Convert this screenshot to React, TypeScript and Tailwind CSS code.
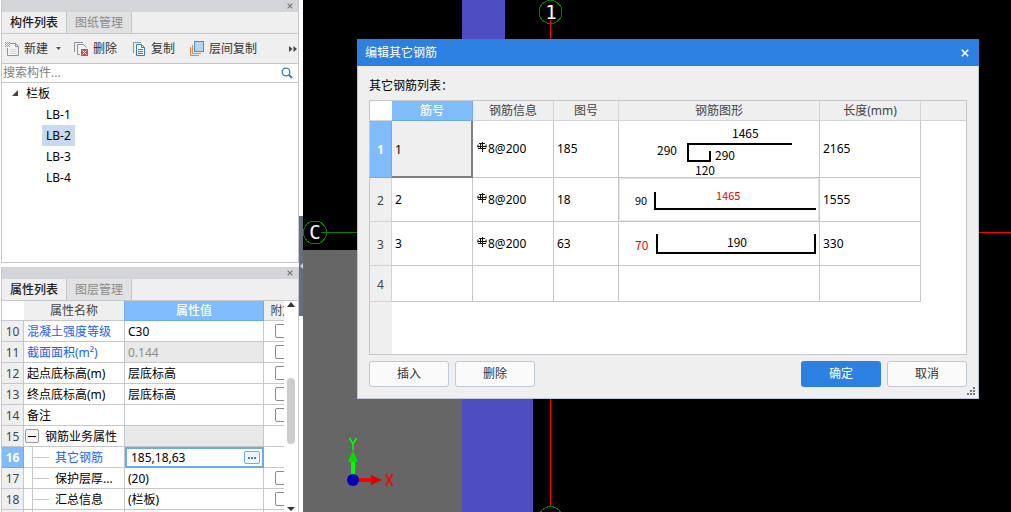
import React, { useState } from 'react';

const components = ['LB-1', 'LB-2', 'LB-3', 'LB-4'];

type PropertyRow = {
  no: number | null;
  name: string;
  value: string;
  link?: boolean;
  readOnly?: boolean;
  group?: boolean;
  child?: boolean;
  check?: boolean;
};

const properties: PropertyRow[] = [
  { no: 10, name: '混凝土强度等级', value: 'C30', link: true, check: true },
  { no: 11, name: '截面面积(m²)', value: '0.144', link: true, readOnly: true, check: true },
  { no: 12, name: '起点底标高(m)', value: '层底标高', check: true },
  { no: 13, name: '终点底标高(m)', value: '层底标高', check: true },
  { no: 14, name: '备注', value: '', check: true },
  { no: 15, name: '钢筋业务属性', value: '', group: true, readOnly: true },
  { no: 16, name: '其它钢筋', value: '185,18,63', link: true, child: true },
  { no: 17, name: '保护层厚...', value: '(20)', child: true, check: true },
  { no: 18, name: '汇总信息', value: '(栏板)', child: true, check: true },
  { no: null, name: '', value: '', child: true },
];

const CloseIcon = ({ size }: { size: number }) => (
  <svg width={size} height={size} viewBox="0 0 8 8" fill="none" stroke="currentColor" strokeWidth="1.6">
    <path d="M0.8 0.8 7.2 7.2M7.2 0.8 0.8 7.2" />
  </svg>
);

const NewIcon = () => (
  <svg width="16" height="16" viewBox="0 0 16 16" fill="none">
    <path d="M6 2.5h5.500l3 3v9h-11V7" fill="#f4f4f4" stroke="#8a949e" />
    <path d="M11.500 2.500v3h3" stroke="#8a949e" />
    <path d="M6 8.500h7M6 10.500h7M6 12.500h7" stroke="#d3d7db" />
    <path d="M1 1.500h1M3 1.500h1M5 1.500h1M2 2.500h1M4 2.500h1M1 3.500h1M3 3.500h1M5 3.500h1M2 4.500h1M4 4.500h1M1 5.500h1M3 5.500h1M5 5.500h1" stroke="#f08a1d" />
  </svg>
);

const DeleteIcon = () => (
  <svg width="16" height="16" viewBox="0 0 16 16" fill="none">
    <path d="M1.500 11V1.500H10" stroke="#8a949e" />
    <path d="M7 13.500H4.500v-10h6l3 3" fill="#f4f4f4" stroke="#8a949e" />
    <rect x="8" y="8" width="7" height="7" fill="#d9474b" />
    <path d="m9.500 9.500 4 4m0-4-4 4" stroke="#fff" />
  </svg>
);

const CopyIcon = () => (
  <svg width="16" height="16" viewBox="0 0 16 16" fill="none">
    <path d="M2.500 12V1.500H10" stroke="#8a949e" />
    <path d="M5.500 3.500h5l3 3v8h-8z" fill="#fff" stroke="#2c7fc9" />
    <path d="M10.500 3.500v3h3" stroke="#2c7fc9" />
    <path d="M7 8.500h5M7 10.500h5M7 12.500h5" stroke="#2c7fc9" />
  </svg>
);

const LayerCopyIcon = () => (
  <svg width="16" height="16" viewBox="0 0 16 16" fill="none">
    <path d="M1.500 6v8.500H10" stroke="#ee8136" />
    <path d="M3.500 4v8.500H12" stroke="#ee8136" />
    <rect x="5.500" y="0.500" width="9" height="10" fill="#b5d6fc" stroke="#3f8fdc" />
  </svg>
);

const SearchIcon = () => (
  <svg width="12" height="12" viewBox="0 0 12 12" fill="none" stroke="#2683c2">
    <circle cx="5" cy="5" r="3.800" strokeWidth="1.300" />
    <path d="m8 8 3 3" strokeWidth="2" />
  </svg>
);

// HRB400 grade mark that stands before the diameter
const RebarMark = () => (
  <svg className="-mt-1" width="10" height="10" viewBox="0 0 10 10" fill="none" stroke="#111">
    <path d="M2 1.500h6M1 2.500v3M9 2.500v3M1 6.500h8M0.500 4.500h9M5.500 0v10M3.500 1v6" />
  </svg>
);

const DockHeader = () => (
  <div className="flex h-3 shrink-0 items-center justify-end bg-[#d4d5d9] pr-[5px] text-[#777]">
    <button type="button" aria-label="关闭面板">
      <CloseIcon size={6} />
    </button>
  </div>
);

const Tabs = ({ items }: { items: string[] }) => (
  <div role="tablist" className="flex h-[22px] shrink-0 border-b border-[#c5c7cd] bg-[#efefef]">
    {items.map((item, i) => (
      <button
        key={item}
        type="button"
        role="tab"
        aria-selected={i === 0}
        className={`w-[65px] border-r border-[#c5c7cd] text-center ${
          i === 0 ? 'font-medium text-[#222]' : 'bg-[#e1e1e1] text-[#8a8a8a]'
        }`}
      >
        {item}
      </button>
    ))}
  </div>
);

function ComponentPanel() {
  const [selected, setSelected] = useState('LB-2');

  return (
    <section className="flex min-h-0 flex-col border border-t-0 border-[#c5c7cd] bg-white">
      <DockHeader />
      <Tabs items={['构件列表', '图纸管理']} />
      <div className="flex h-[30px] shrink-0 items-center overflow-hidden border-b border-[#c5c7cd] bg-[#efefef] pl-0.5 whitespace-nowrap text-[#333]">
        <button type="button" className="flex items-center gap-1">
          <NewIcon />
          新建
          <svg className="ml-1" width="5" height="3" viewBox="0 0 5 3" fill="#555">
            <path d="M0 0h5L2.500 3z" />
          </svg>
        </button>
        <button type="button" className="ml-3 flex items-center gap-1">
          <DeleteIcon />
          删除
        </button>
        <button type="button" className="ml-3.5 flex items-center gap-1">
          <CopyIcon />
          复制
        </button>
        <button type="button" className="ml-3.5 flex items-center gap-1">
          <LayerCopyIcon />
          层间复制
        </button>
        <button type="button" aria-label="更多" className="ml-auto pr-px">
          <svg width="8" height="6" viewBox="0 0 8 6" fill="#444">
            <path d="M0 0v6l3.500-3zM4.500 0v6L8 3z" />
          </svg>
        </button>
      </div>
      <div className="flex h-[19px] shrink-0 items-center border-b border-[#c5c7cd] pr-[5px] pl-px">
        <input
          type="text"
          aria-label="搜索构件"
          placeholder="搜索构件..."
          className="min-w-0 flex-1 outline-none placeholder:text-[#808080]"
        />
        <button type="button" aria-label="搜索">
          <SearchIcon />
        </button>
      </div>
      <div className="min-h-0 flex-1 overflow-hidden text-black">
        <div className="flex h-[21px] items-center gap-[7px] pl-2.5">
          <svg width="7" height="7" viewBox="0 0 7 7" fill="#444">
            <path d="M6 0v6H0z" />
          </svg>
          栏板
        </div>
        <ul className="pl-10">
          {components.map((name) => (
            <li key={name}>
              <button
                type="button"
                onClick={() => setSelected(name)}
                className={`h-[21px] px-1 ${selected === name ? 'bg-[#c9d9f1]' : ''}`}
              >
                {name}
              </button>
            </li>
          ))}
        </ul>
      </div>
    </section>
  );
}

const PropertyName = ({ row }: { row: PropertyRow }) => {
  if (row.group) {
    return (
      <div className="flex items-center gap-1.5">
        <button
          type="button"
          aria-label="折叠"
          className="flex size-[14px] items-center justify-center rounded-xs border border-[#999] bg-[#f4f4f4]"
        >
          <span className="h-px w-2 bg-black" />
        </button>
        <span className="pt-0.5">{row.name}</span>
      </div>
    );
  }
  if (row.child) {
    return (
      <div className="flex h-5 items-center pl-[7px]">
        <span className="h-full w-px bg-[#c5c7cd]" />
        <span className="mr-1.5 h-px w-4 bg-[#c5c7cd]" />
        <span className="pt-0.5">{row.name}</span>
      </div>
    );
  }
  return <div className="pt-0.5">{row.name}</div>;
};

function PropertyPanel() {
  const [rebar, setRebar] = useState('185,18,63');

  return (
    <section className="flex min-h-0 flex-col overflow-hidden border-x border-[#c5c7cd] bg-white">
      <DockHeader />
      <Tabs items={['属性列表', '图层管理']} />
      <div className="flex min-h-0 flex-1">
        <div className="min-w-0 flex-1 overflow-hidden">
          <table className="w-[299px] table-fixed border-separate border-spacing-0 whitespace-nowrap">
            <colgroup>
              <col className="w-[22px]" />
              <col className="w-[101px]" />
              <col className="w-[139px]" />
              <col className="w-[37px]" />
            </colgroup>
            <thead>
              <tr className="h-5 text-[#444]">
                <td className="border-b border-[#c5c7cd] p-0" />
                <th className="border-r border-b border-r-[#6caae8] border-b-[#c5c7cd] bg-[#efefef] p-0 font-normal">
                  属性名称
                </th>
                <th className="border-r border-b border-[#6caae8] bg-[#80bbfb] p-0 font-medium text-white">属性值</th>
                <th className="border-b border-[#c5c7cd] bg-[#efefef] p-0 font-normal">附加</th>
              </tr>
            </thead>
            <tbody>
              {properties.map((row, i) => {
                const active = row.no === 16;
                return (
                  <tr key={i} className="h-[21px]">
                    <th
                      className={`border-r border-b px-0 pt-0.5 pb-0 ${
                        active
                          ? 'border-[#6caae8] bg-[#80bbfb] font-bold text-white'
                          : 'border-[#c5c7cd] bg-[#efefef] font-normal text-[#444]'
                      }`}
                    >
                      {row.no}
                    </th>
                    <td
                      className={`border-r border-b border-[#c5c7cd] py-0 pr-0 ${row.group || row.child ? 'pl-px' : 'pl-[3px]'} ${
                        row.link ? 'text-[#1e5eff]' : 'text-black'
                      }`}
                    >
                      <PropertyName row={row} />
                    </td>
                    {active ? (
                      <td className="p-0">
                        <div className="flex h-[21px] items-center border-2 border-[#6caae8] bg-white pr-0.5 pl-1">
                          <input
                            type="text"
                            aria-label={row.name}
                            value={rebar}
                            onChange={(e) => setRebar(e.target.value)}
                            className="min-w-0 flex-1 text-black outline-none"
                          />
                          <button
                            type="button"
                            aria-label="编辑"
                            className="flex h-[13px] w-4 items-center justify-center gap-px rounded-xs border border-[#6caae8] bg-[#eef5fd]"
                          >
                            <span className="size-0.5 bg-[#4a7fb5]" />
                            <span className="size-0.5 bg-[#4a7fb5]" />
                            <span className="size-0.5 bg-[#4a7fb5]" />
                          </button>
                        </div>
                      </td>
                    ) : (
                      <td
                        className={`border-r border-b border-[#c5c7cd] pt-0.5 pr-0 pb-0 pl-[3px] ${
                          row.readOnly ? 'bg-[#e9e9e9] text-[#8c8c8c]' : 'text-black'
                        }`}
                      >
                        {row.value}
                      </td>
                    )}
                    <td className="border-b border-[#c5c7cd] p-0">
                      {row.check && (
                        <input
                          type="checkbox"
                          aria-label={`附加 ${row.name}`}
                          className="ml-[11px] block size-[14px] appearance-none rounded-xs border border-[#8a8a8a] bg-white"
                        />
                      )}
                    </td>
                  </tr>
                );
              })}
            </tbody>
          </table>
        </div>
        <div className="flex w-[14px] shrink-0 flex-col items-center bg-white py-px">
          <svg width="8" height="5" viewBox="0 0 8 5" fill="#333">
            <path d="M4 0 8 5H0z" />
          </svg>
          <div className="flex flex-1 flex-col">
            <div className="grow-[71]" />
            <div className="w-2 grow-[66] rounded-full bg-[#cdcdcd]" />
            <div className="grow-[63]" />
          </div>
          <svg width="8" height="4" viewBox="0 0 8 4" fill="#333">
            <path d="M0 0h8L4 4z" />
          </svg>
        </div>
      </div>
    </section>
  );
}

const Splitter = () => (
  <div className="flex w-1 shrink-0 flex-col justify-center bg-white pt-5">
    <div className="flex h-[100px] items-center bg-[#656f7c]">
      <svg width="4" height="6" viewBox="0 0 4 6" fill="#ccd2da">
        <path d="M4 0v6L1 3z" />
      </svg>
    </div>
  </div>
);

// Plan view behind the dialog: slab, railing strip, axis grid and UCS mark
const PlanView = () => (
  <svg className="block size-full" fill="none" shapeRendering="crispEdges">
    <rect x="0" y="250" width="159" height="100%" fill="#666666" />
    <rect x="159" y="0" width="43" height="100%" fill="#4f4dc2" />
    <rect x="159" y="250" width="71" height="100%" fill="#4f4dc2" />
    <path d="M247.500 0v2000" stroke="#ff0000" />
    <path d="M54 232.500h2000" stroke="#ff0000" />
    <path d="M0 232.500h54" stroke="#008000" />
    <circle cx="247.500" cy="12" r="11.500" fill="#000" stroke="#008000" />
    <path d="M247.500 12v27" stroke="#ff0000" />
    <circle cx="247.500" cy="518" r="11.500" fill="#000" stroke="#008000" />
    <circle cx="12" cy="232.500" r="11.500" fill="#000" stroke="#008000" />
    <path d="M11 232.500h13" stroke="#008000" />
    <g className="font-['DejaVu_Sans_Mono',monospace] text-[19px]" textAnchor="middle" fill="#fff">
      <rect x="243" y="4" width="9" height="16" fill="#000" />
      <rect x="8" y="225" width="10" height="15" fill="#000" />
      <text x="248" y="19">1</text>
      <text x="12" y="239">C</text>
    </g>
    <g shapeRendering="auto">
      <path d="M50 478v-20" stroke="#00ff00" strokeWidth="4" />
      <path d="m50 450 5 12H45z" fill="#00e000" />
      <path d="M50 480h22" stroke="#ff0000" strokeWidth="4" />
      <path d="m79 480-11-5v10z" fill="#e00000" />
      <circle cx="50" cy="480" r="6" fill="#0000b4" />
      <path d="m46.500 438 3.500 6 3.500-6M50 443v7" stroke="#00ff00" strokeWidth="1.500" />
      <path d="m82.500 474 7 12m0-12-7 12" stroke="#ff0000" strokeWidth="1.500" />
    </g>
  </svg>
);

const shapeText = "font-['Noto_Sans_CJK_SC',sans-serif]";

const HookShape = () => (
  <svg className={`block ${shapeText} text-[12px]`} width="200" height="56" viewBox="0 0 200 56">
    <path d="M173 23H69v17h22v-10" fill="none" stroke="#000" strokeWidth="2" />
    <text x="113" y="17">1465</text>
    <text x="38" y="34">290</text>
    <text x="96" y="39">290</text>
    <text x="76" y="54">120</text>
  </svg>
);

const LShape = () => (
  <svg className={`block ${shapeText} text-[11px]`} width="200" height="43" viewBox="0 0 200 43">
    <rect x="0.500" y="0.500" width="199" height="42" fill="none" stroke="#e3e3e3" />
    <path d="M36 14v17h161" fill="none" stroke="#000" strokeWidth="2" />
    <text x="16" y="27">90</text>
    <text x="97" y="22" fill="#f00000">1465</text>
  </svg>
);

const UShape = () => (
  <svg className={`block ${shapeText} text-[12px]`} width="200" height="43" viewBox="0 0 200 43">
    <path d="M38 12v19h158V12" fill="none" stroke="#000" strokeWidth="2" />
    <text x="16" y="28" fill="#f00000">70</text>
    <text x="108" y="25">190</text>
  </svg>
);

const rebars = [
  { id: '1', info: '8@200', figure: '185', shape: <HookShape />, length: '2165', height: 'h-[57px]' },
  { id: '2', info: '8@200', figure: '18', shape: <LShape />, length: '1555', height: 'h-11' },
  { id: '3', info: '8@200', figure: '63', shape: <UShape />, length: '330', height: 'h-11' },
  { id: '', info: '', figure: '', shape: null, length: '', height: 'h-9' },
];

const headers = ['筋号', '钢筋信息', '图号', '钢筋图形', '长度(mm)', ''];

const cell = 'border-r border-b border-[#c5c7cd] py-0 pr-0 pl-[3px]';
const plainButton =
  'h-[26px] w-20 rounded-[3px] border border-[#c0c8d6] bg-[#fafafa] text-[#333] hover:bg-white';

function RebarDialog({ onClose }: { onClose: () => void }) {
  return (
    <div
      role="dialog"
      aria-labelledby="rebar-title"
      className="absolute top-[39px] right-8 left-[54px] flex flex-col bg-[#efefef] text-black"
    >
      <div className="flex h-[27px] items-center justify-between bg-[#2c80e2] pr-2.5 pl-2 text-white">
        <h1 id="rebar-title">编辑其它钢筋</h1>
        <button type="button" aria-label="关闭" onClick={onClose}>
          <CloseIcon size={8} />
        </button>
      </div>
      <div className="relative border border-t-0 border-[#c0c8d6] px-[11px] pt-2.5 pb-[11px]">
        <p className="h-6 leading-5">其它钢筋列表：</p>
        <div className="overflow-hidden border border-[#c5c7cd] bg-white">
          <table className="w-full table-fixed border-separate border-spacing-0 text-left">
            <colgroup>
              <col className="w-[22px]" />
              <col className="w-[81px]" />
              <col className="w-[81px]" />
              <col className="w-[65px]" />
              <col className="w-[201px]" />
              <col className="w-[101px]" />
              <col />
            </colgroup>
            <thead>
              <tr className="h-5">
                <td className="border-b border-[#d2d3d6] p-0" />
                {headers.map((header, i) => (
                  <th
                    key={i}
                    className={`border-b p-0 text-center ${
                      i === 0
                        ? 'border-r border-[#6caae8] bg-[#80bbfb] font-medium text-white'
                        : 'border-[#d2d3d6] bg-[#efefef] font-normal text-[#444]'
                    } ${i > 0 && i < 5 ? 'border-r' : ''}`}
                  >
                    {header}
                  </th>
                ))}
              </tr>
            </thead>
            <tbody>
              {rebars.map((rebar, i) => (
                <tr key={i} className={rebar.height}>
                  <th
                    className={`border-r border-b px-0 pt-0.5 pb-0 text-center ${
                      i === 0
                        ? 'border-[#6caae8] bg-[#80bbfb] font-bold text-white'
                        : 'border-[#d2d3d6] bg-[#efefef] font-normal text-[#444]'
                    }`}
                  >
                    {i + 1}
                  </th>
                  <td
                    className={
                      i === 0 ? 'border-r-2 border-b-2 border-[#808080] bg-[#efefef] pt-0.5 pr-0 pb-0 pl-[3px]' : cell
                    }
                  >
                    {rebar.id}
                  </td>
                  <td className={cell}>
                    {rebar.info && (
                      <span className="flex items-center gap-px pl-px">
                        <RebarMark />
                        {rebar.info}
                      </span>
                    )}
                  </td>
                  <td className={cell}>{rebar.figure}</td>
                  <td className="border-r border-b border-[#c5c7cd] p-0">{rebar.shape}</td>
                  <td className={cell}>{rebar.length}</td>
                  <td className="p-0" />
                </tr>
              ))}
              <tr className="h-[52px]">
                <td className="bg-[#efefef] p-0" />
                <td colSpan={6} className="p-0" />
              </tr>
            </tbody>
          </table>
        </div>
        <div className="mt-1.5 flex gap-1.5">
          <button type="button" className={plainButton}>
            插入
          </button>
          <button type="button" className={plainButton}>
            删除
          </button>
          <button
            type="button"
            onClick={onClose}
            className="ml-auto h-[26px] w-20 rounded-[3px] bg-[#2c80e2] text-white hover:bg-[#4290ea]"
          >
            确定
          </button>
          <button type="button" onClick={onClose} className={plainButton}>
            取消
          </button>
        </div>
        <svg className="absolute right-[3px] bottom-[3px]" width="8" height="8" viewBox="0 0 8 8" fill="#6f7785">
          <path d="M6 0h2v2H6zM3 3h2v2H3zM6 3h2v2H6zM0 6h2v2H0zM3 6h2v2H3zM6 6h2v2H6z" />
        </svg>
      </div>
    </div>
  );
}

export default function App() {
  const [open, setOpen] = useState(true);

  return (
    <div className="flex h-screen overflow-hidden bg-white font-['Noto_Sans','Noto_Sans_CJK_SC',sans-serif] text-[12px] leading-[18px]">
      <aside className="grid w-[299px] shrink-0 grid-rows-[263fr_245fr] gap-1 pl-px">
        <ComponentPanel />
        <PropertyPanel />
      </aside>
      <Splitter />
      <main className="relative min-w-0 flex-1 bg-black">
        <PlanView />
        {open && <RebarDialog onClose={() => setOpen(false)} />}
      </main>
    </div>
  );
}
